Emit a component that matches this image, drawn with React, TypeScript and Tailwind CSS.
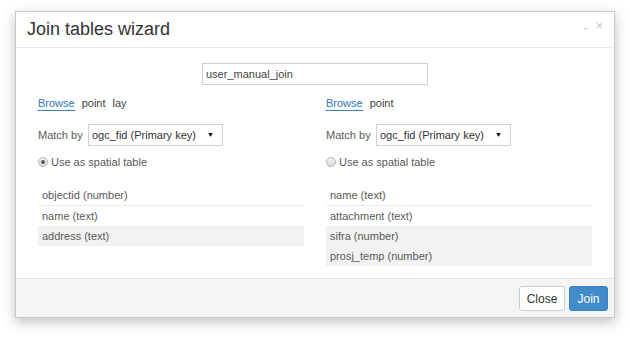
import React from "react";

type Field = {
  label: string;
  shaded?: boolean;
};

type Side = {
  layers: string[];
  spatial: boolean;
  fields: Field[];
};

const sides: Side[] = [
  {
    layers: ["point", "lay"],
    spatial: true,
    fields: [
      { label: "objectid (number)" },
      { label: "name (text)" },
      { label: "address (text)", shaded: true },
    ],
  },
  {
    layers: ["point"],
    spatial: false,
    fields: [
      { label: "name (text)" },
      { label: "attachment (text)" },
      { label: "sifra (number)", shaded: true },
      { label: "prosj_temp (number)", shaded: true },
    ],
  },
];

function Radio({ checked }: { checked: boolean }) {
  return (
    <span className="flex h-[10px] w-[10px] items-center justify-center rounded-full border border-[#b5b5b5] bg-gradient-to-b from-[#f4f4f4] to-[#dcdcdc]">
      {checked && <span className="h-[4px] w-[4px] rounded-full bg-[#555]" />}
    </span>
  );
}

function TableColumn({ side }: { side: Side }) {
  return (
    <div className="flex flex-col">
      <div className="mt-[11px] flex h-[15px] items-start gap-[7px] leading-[14px]">
        <span className="border-b border-[#3a7fb8] text-[#2f76b3]">Browse</span>
        {side.layers.map((l) => (
          <span key={l} className="text-[#444]">
            {l}
          </span>
        ))}
      </div>

      <div className="mt-[13px] flex items-center">
        <span className="w-[50px] text-[#5a5a5a]">Match by</span>
        <div className="flex h-[22px] w-[135px] items-center justify-between border border-[#cfcfcf] bg-white pr-[8px] pl-[3px] text-[#333]">
          <span>ogc_fid (Primary key)</span>
          <span className="text-[7px] text-black">▼</span>
        </div>
      </div>

      <div className="mt-[9px] flex h-[14px] items-center gap-[3px] text-[#5a5a5a]">
        <Radio checked={side.spatial} />
        <span>Use as spatial table</span>
      </div>

      <div className="mt-[17px] flex flex-col">
        {side.fields.map((f, i) => (
          <div
            key={f.label}
            className={
              "flex h-[20px] items-center px-[4px] text-[#5a5a5a] " +
              (i === 0 ? "border-b border-[#ececec] " : "") +
              (f.shaded ? "bg-[#f2f2f2]" : "")
            }
          >
            {f.label}
          </div>
        ))}
      </div>
    </div>
  );
}

export default function App() {
  return (
    <main className="min-h-[337px] bg-white pt-[11px] font-['Liberation_Sans',Arial,sans-serif] text-[11px]">
      <div className="ml-[15px] w-[600px] border border-[#c9c9c9] bg-white shadow-[0_4px_12px_rgba(0,0,0,0.25)]">
        <div className="flex h-[36px] items-center justify-between border-b border-[#e9e9e9] pr-[11px] pl-[11px]">
          <h1 className="text-[18px] text-[#333]">Join tables wizard</h1>
          <div className="-mt-[8px] flex items-center gap-[8px] text-[#c4c4c4]">
            <span className="mt-[4px] text-[11px]">-</span>
            <span className="text-[13px]">×</span>
          </div>
        </div>

        <div className="px-[22px] pb-[12px]">
          <div className="flex justify-center pt-[15px]">
            <div className="flex h-[22px] w-[226px] items-center border border-[#cfcfcf] px-[3px] text-[#444]">
              user_manual_join
            </div>
          </div>

          <div className="grid grid-cols-2 items-start gap-[22px]">
            {sides.map((s, i) => (
              <TableColumn key={i} side={s} />
            ))}
          </div>
        </div>

        <div className="flex justify-end gap-[4px] border-t border-[#e3e3e3] bg-[#f4f4f4] pt-[7px] pr-[6px] pb-[6px]">
          <button className="h-[25px] w-[46px] rounded-[3px] border border-[#cccccc] bg-white text-[12px] text-[#333]">
            Close
          </button>
          <button className="h-[25px] w-[39px] rounded-[3px] border border-[#3a83c4] bg-[#428bca] text-[12px] text-white">
            Join
          </button>
        </div>
      </div>
    </main>
  );
}
